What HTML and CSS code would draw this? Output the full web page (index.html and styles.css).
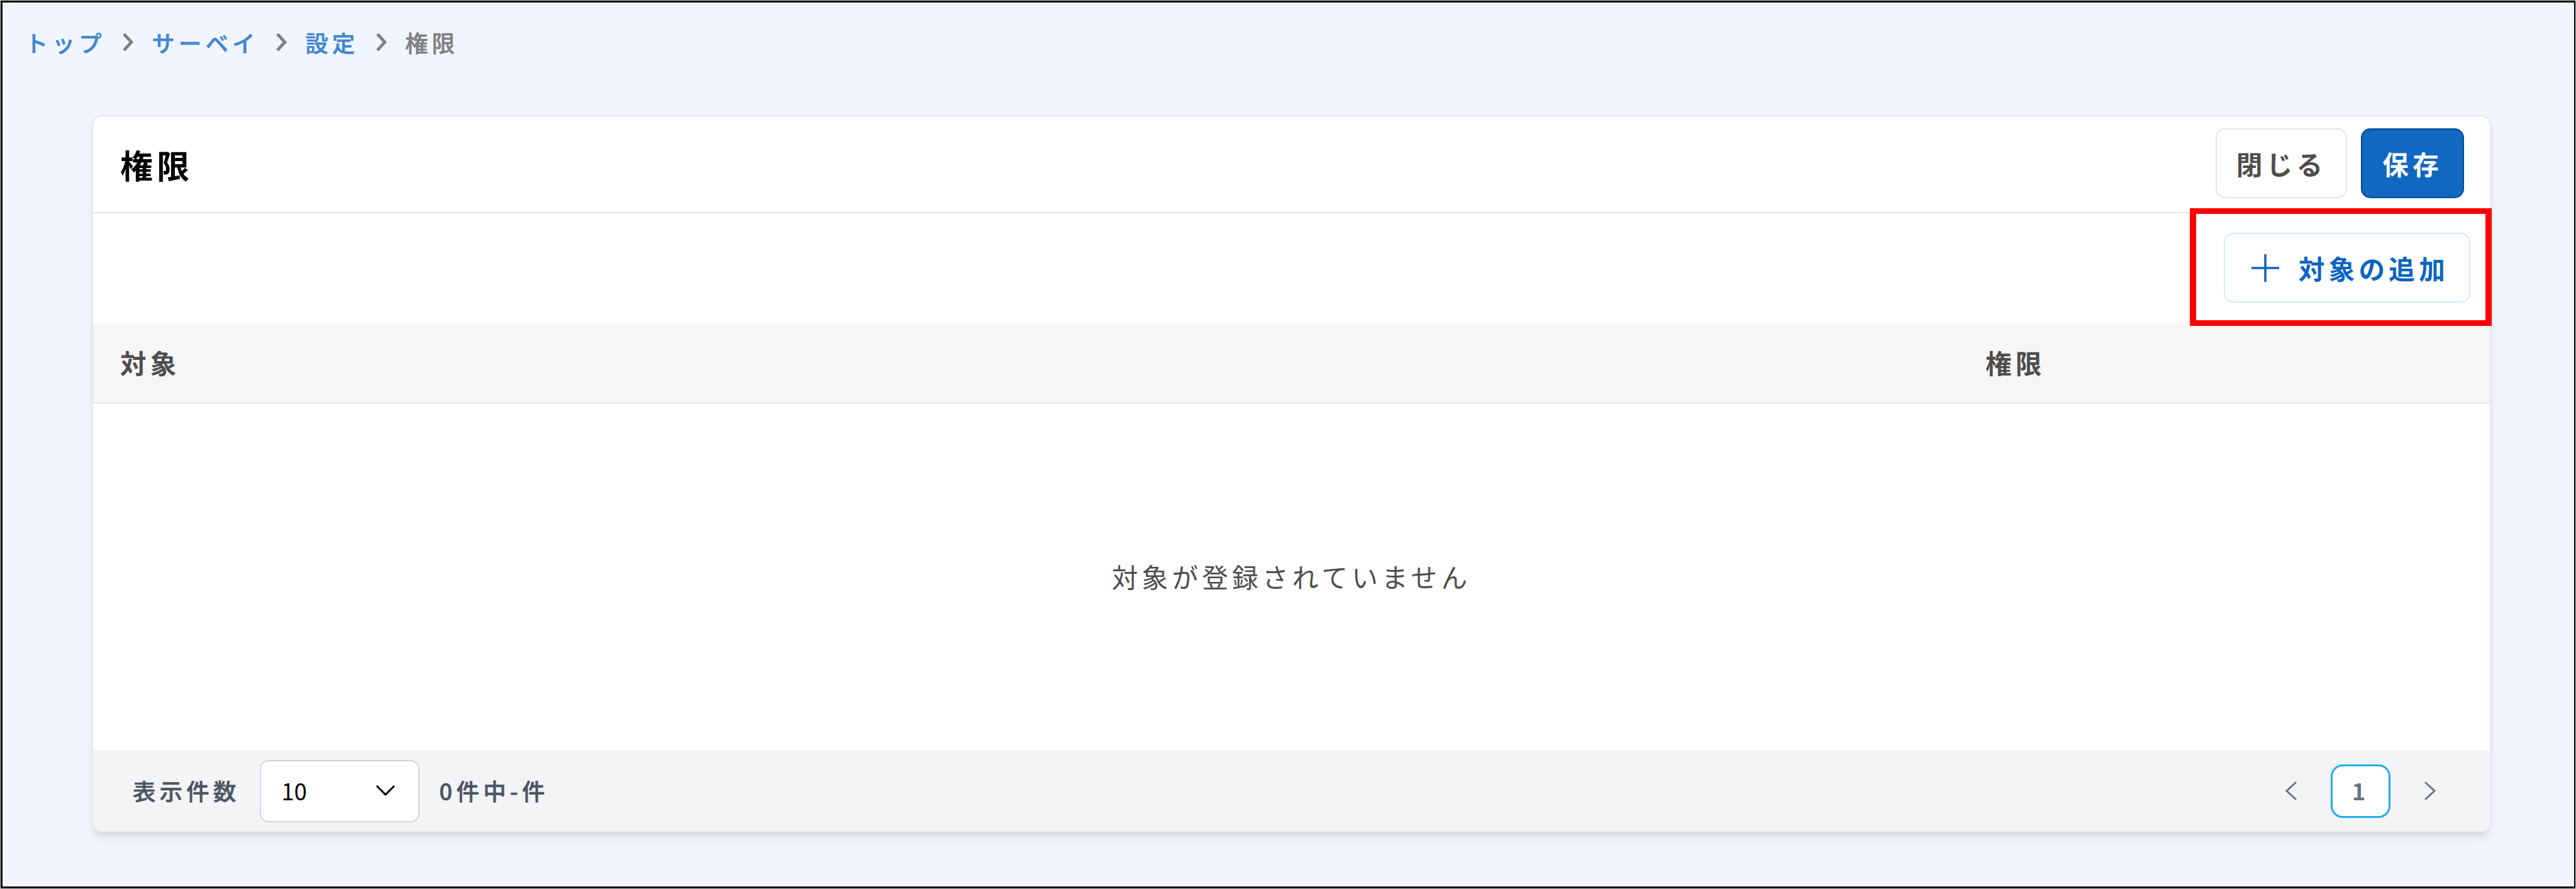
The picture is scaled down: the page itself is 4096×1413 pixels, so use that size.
FILE: index.html
```
<!DOCTYPE html>
<html lang="ja">
<head>
	<meta charset="UTF-8">
	<title>権限</title>
	<link rel="stylesheet" href="styles.css">
</head>
<body>
	<div id="wrap">
		<div class="crumb">
			<a href="javascript:;">トップ</a>
			<svg viewBox="0 0 18 28"><path d="M2 1L14 14L2 27"/></svg>
			<a href="javascript:;">サーベイ</a>
			<svg viewBox="0 0 18 28"><path d="M2 1L14 14L2 27"/></svg>
			<a href="javascript:;">設定</a>
			<svg viewBox="0 0 18 28"><path d="M2 1L14 14L2 27"/></svg>
			<span>権限</span>
		</div>
		<div class="card">
			<div class="head">
				<h1>権限</h1>
				<button class="btn">閉じる</button>
				<button class="btn save">保存</button>
			</div>
			<div class="tool">
				<button class="btn add">
					<svg viewBox="0 0 62 62"><path d="M31 9V53M9 31H53"/></svg>
					対象の追加
				</button>
				<div class="mark"></div>
			</div>
			<div class="thead">
				<span>対象</span>
				<span>権限</span>
			</div>
			<div class="empty">対象が登録されていません</div>
			<div class="foot">
				<span>表示件数</span>
				<div class="select">
					10
					<svg viewBox="0 0 32 18"><path d="M2 2L16 16L30 2"/></svg>
				</div>
				<span>0件中-件</span>
				<div class="pager">
					<svg viewBox="0 0 18 30"><path d="M16 2L2 15L16 28"/></svg>
					<strong>1</strong>
					<svg viewBox="0 0 18 30"><path d="M2 2L16 15L2 28"/></svg>
				</div>
			</div>
		</div>
	</div>
</body>
</html>
```
FILE: styles.css
```
*{box-sizing: border-box;}
body,h1{margin: 0;padding: 0;}
body{height: 1413px;padding: 1px;background: #ccd2d0;overflow: hidden;}
body,button{font-family: "Noto Sans CJK JP",sans-serif;letter-spacing: 6.24px;}
a{text-decoration: none;color: #4187d0;}
svg{display: block;flex: none;fill: none;stroke: currentColor;}
#wrap{height: 1411px;border: 3px solid #000;border-width: 3px 2px 3px 3px;background: #f1f6fe;}

.crumb{display: flex;align-items: center;height: 126px;padding-left: 36px;font-size: 36.4px;font-weight: 500;color: #808080;}
.crumb a,.crumb span,.foot span{-webkit-text-stroke: .6px currentColor;}
.crumb svg{width: 18px;height: 28px;margin: 0 28.5px 0 27px;stroke-width: 4.8;}

.card{display: flex;flex-direction: column;width: 3815px;height: 1140px;margin: 53px 0 0 142px;border: 2px solid #e5e7eb;border-radius: 16px;background: #fff;box-shadow: 0 10px 16px -3px rgba(0,0,0,.1),0 5px 10px -5px rgba(0,0,0,.1);}
.head{display: flex;align-items: flex-start;height: 154px;padding: 19px 41px 0 43px;border-bottom: 2px solid #e5e7eb;}
.head h1{flex: 1;font-size: 52px;line-height: 115px;font-weight: 700;color: #000;}
.btn{height: 111px;padding: 0 31px;border: 2px solid #e5e5e5;border-radius: 15px;background: #fff;font-size: 41.6px;font-weight: 700;color: #4d4d4d;}
.save{margin-left: 22px;padding: 0 32px;border-color: #064c92;background: #1068c1;color: #fff;}

.tool{position: relative;display: flex;justify-content: flex-end;height: 175px;padding: 31px 31px 0 0;}
.add{display: flex;align-items: center;padding: 0 32px 0 33px;border-color: #d6e9ff;color: #0b65c1;}
.add svg{width: 62px;height: 62px;margin-right: 22px;stroke-width: 3.6;}
.mark{position: absolute;top: -8px;right: -3px;width: 480px;height: 187px;border: 10px solid #f00;border-width: 9px 10px;}

.thead{display: grid;grid-template-columns: 2966px 1fr;align-items: center;height: 128px;padding: 0 0 3px 43px;border-bottom: 2px solid #e5e7eb;background: #f6f6f6;font-size: 41.6px;font-weight: 700;color: #4d4d4d;}
.empty{display: flex;flex: 1;align-items: center;justify-content: center;padding-bottom: 4px;font-size: 41.6px;color: #4d4d4d;}

.foot{display: flex;align-items: center;height: 128px;padding: 0 86px 0 63px;border-radius: 0 0 14px 14px;background: #f3f4f6;font-size: 36.4px;font-weight: 500;color: #4b5563;}
.foot span{padding-bottom: 2px;}
.select{display: flex;align-items: center;justify-content: space-between;width: 254px;height: 99px;margin: 0 32px 0 31px;padding: 0 36px 2px 33px;border: 2px solid #d1d5db;border-radius: 14px;background: #fff;letter-spacing: 0;font-weight: 400;color: #000;}
.select svg{width: 32px;height: 18px;stroke-width: 3;}
.pager{display: flex;align-items: center;margin-left: auto;color: #6b7280;}
.pager svg{width: 18px;height: 30px;stroke-width: 3;stroke-linecap: round;}
.pager strong{width: 95px;height: 85px;margin: 0 54px;border: 3px solid #1eaeef;border-radius: 19px;background: #fff;line-height: 77px;text-align: center;}
```
